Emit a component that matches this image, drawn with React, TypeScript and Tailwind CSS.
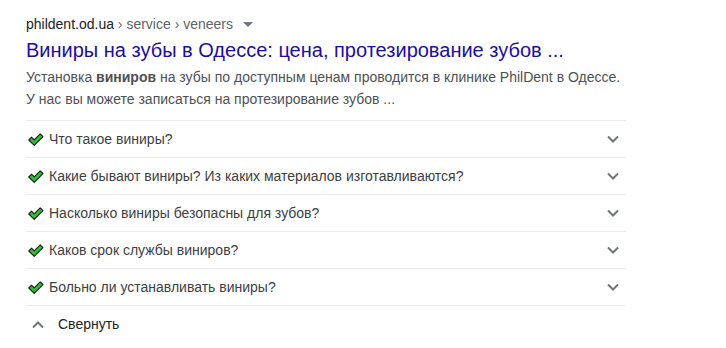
import React from "react";

const questions = [
  "Что такое виниры?",
  "Какие бывают виниры? Из каких материалов изготавливаются?",
  "Насколько виниры безопасны для зубов?",
  "Каков срок службы виниров?",
  "Больно ли устанавливать виниры?",
];

function Check() {
  return (
    <svg width="16" height="13" viewBox="0 0 16 13" className="shrink-0">
      <path
        d="M0.8 7 L3.6 4.2 L6.2 6.8 L12.2 0.8 L15 3.6 L6.2 12.3 Z"
        fill="#2fbf2f"
        stroke="#1a1a1a"
        strokeWidth="1.1"
        strokeLinejoin="round"
      />
    </svg>
  );
}

function Chevron({ up = false }: { up?: boolean }) {
  return (
    <svg width="14" height="9" viewBox="0 0 14 9" className="shrink-0">
      <path
        d={up ? "M2 7.5 L7 2.5 L12 7.5" : "M2 1.5 L7 6.5 L12 1.5"}
        fill="none"
        stroke="#70757a"
        strokeWidth="2"
      />
    </svg>
  );
}

export default function App() {
  return (
    <div
      className="w-[726px] h-[348px] bg-white pl-[26px] pt-[14px]"
      style={{ fontFamily: '"Liberation Sans", Arial, sans-serif' }}
    >
      <div className="w-[600px]">
        <div className="flex items-center text-[14px] leading-[20px]">
          <span className="text-[#202124]">phildent.od.ua</span>
          <span className="text-[#5f6368]">&nbsp;›&nbsp;service&nbsp;›&nbsp;veneers</span>
          <span className="ml-[10px] w-0 h-0 border-l-[5px] border-r-[5px] border-t-[5px] border-l-transparent border-r-transparent border-t-[#70757a]"></span>
        </div>
        <div className="mt-[3px] text-[20px] leading-[26px] text-[#1a0dab] whitespace-nowrap">
          Виниры на зубы в Одессе: цена, протезирование зубов ...
        </div>
        <div className="mt-[3px] text-[14px] leading-[22px] text-[#4d5156]">
          <div>
            Установка <b className="font-bold">виниров</b> на зубы по доступным ценам проводится в клинике PhilDent в Одессе.
          </div>
          <div>У нас вы можете записаться на протезирование зубов ...</div>
        </div>
        <div className="mt-[10px] border-t border-[#ebebeb]">
          {questions.map((q) => (
            <div
              key={q}
              className="h-[37px] border-b border-[#ebebeb] flex items-center pl-[2px] pr-[6px]"
            >
              <Check />
              <span className="ml-[5px] text-[14px] text-[#3c4043] flex-1">{q}</span>
              <Chevron />
            </div>
          ))}
          <div className="h-[37px] flex items-center pl-[5px]">
            <Chevron up />
            <span className="ml-[13px] text-[14px] text-[#202124]">Свернуть</span>
          </div>
        </div>
      </div>
    </div>
  );
}
